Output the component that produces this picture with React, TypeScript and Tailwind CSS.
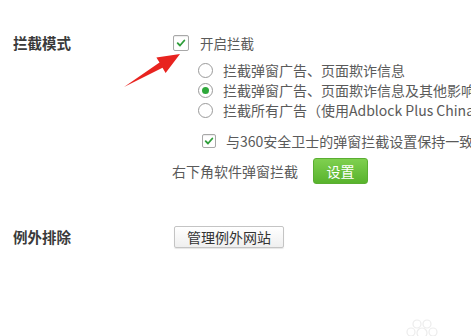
import React from 'react'

const font = { fontFamily: '"Noto Sans CJK SC", "Noto Sans", sans-serif' }

function CheckBox({ size = 16 }: { size?: number }) {
  return (
    <span
      className="flex shrink-0 items-center justify-center rounded-[2px] border border-[#a8a8a8] bg-white shadow-[inset_0_1px_1px_rgba(0,0,0,0.08)]"
      style={{ width: size, height: size }}
    >
      <svg viewBox="0 0 12 12" className="h-[10px] w-[10px]">
        <path d="M2 6.2 L4.8 9 L10 3" fill="none" stroke="#2e9e3a" strokeWidth="2.2" strokeLinecap="round" strokeLinejoin="round" />
      </svg>
    </span>
  )
}

function Radio({ checked, label }: { checked?: boolean; label: string }) {
  return (
    <div className="flex h-5 items-center gap-[10px]">
      <span className="flex h-[15px] w-[15px] shrink-0 items-center justify-center rounded-full border border-[#9a9a9a] bg-white">
        {checked && <span className="h-[7px] w-[7px] rounded-full bg-[#2ea83a]" />}
      </span>
      <span className="text-[14px] leading-5 text-[#5a5a5a]">{label}</span>
    </div>
  )
}

export default function App() {
  return (
    <div className="relative h-[336px] w-full overflow-hidden whitespace-nowrap bg-white" style={font}>
      <div className="flex pt-[35px]">
        <div className="w-[172px] shrink-0 pl-[13px] text-[14.5px] leading-4 font-bold text-[#3a3a3a]">拦截模式</div>
        <div className="flex flex-col">
          <div className="flex h-4 items-center gap-[11px] pl-px">
            <CheckBox />
            <span className="text-[13.5px] text-[#5a5a5a]">开启拦截</span>
          </div>
          <div className="ml-[26px] mt-[9px] flex flex-col">
            <Radio label="拦截弹窗广告、页面欺诈信息" />
            <Radio checked label="拦截弹窗广告、页面欺诈信息及其他影响浏览的广告" />
            <Radio label="拦截所有广告（使用Adblock Plus China规则）" />
          </div>
          <div className="ml-[30px] mt-[14px] flex h-[14px] items-center gap-[10px]">
            <CheckBox size={14} />
            <span className="text-[14px] text-[#5a5a5a]">与360安全卫士的弹窗拦截设置保持一致</span>
          </div>
          <div className="mt-[10px] flex items-center">
            <span className="w-[141px] text-[14px] text-[#5a5a5a]">右下角软件弹窗拦截</span>
            <button className="h-[26px] w-[55px] rounded-[3px] border border-[#5aae32] bg-gradient-to-b from-[#7fd04f] to-[#58b32c] text-[14px] text-white">
              设置
            </button>
          </div>
        </div>
      </div>

      <div className="mt-[42px] flex items-center">
        <div className="w-[172px] shrink-0 pl-[13px] text-[14.5px] font-bold text-[#3a3a3a]">例外排除</div>
        <button className="ml-[2px] h-[22px] w-[110px] rounded-[2px] border border-[#c4c4c4] bg-gradient-to-b from-white to-[#efefef] text-[14px] leading-none text-[#333] shadow-[0_1px_1px_rgba(0,0,0,0.1)]">
          管理例外网站
        </button>
      </div>

      <svg className="pointer-events-none absolute left-0 top-0" width="471" height="336">
        <polygon points="124,87 159.5,62.6 156.4,57.4 180,54 165.6,73 162.5,67.8" fill="#e8231f" />
      </svg>

      <svg className="pointer-events-none absolute bottom-0 right-[18px]" width="60" height="20" viewBox="0 0 60 20">
        <g fill="none" stroke="#ececec" strokeWidth="1.2">
          <circle cx="24" cy="8" r="4" />
          <circle cx="34" cy="8" r="4" />
          <circle cx="18" cy="16" r="4" />
          <circle cx="29" cy="17" r="5" />
          <circle cx="40" cy="16" r="4" />
        </g>
      </svg>
    </div>
  )
}
